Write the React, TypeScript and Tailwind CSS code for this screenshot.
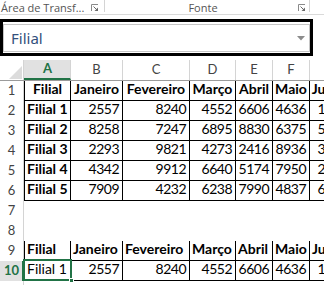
import type { ReactNode } from 'react'

// column widths incl. their right border line
const colW = ['w-[47px]', 'w-[52px]', 'w-[67px]', 'w-[46px]', 'w-[37px]', 'w-[37px]', 'w-[42px]']
const letters = ['A', 'B', 'C', 'D', 'E', 'F', 'G']
const headers = ['Filial', 'Janeiro', 'Fevereiro', 'Março', 'Abril', 'Maio', 'Junho']

const data: (string | number)[][] = [
  ['Filial 1', 2557, 8240, 4552, 6606, 4636, 1783],
  ['Filial 2', 8258, 7247, 6895, 8830, 6375, 5120],
  ['Filial 3', 2293, 9821, 4273, 2416, 8936, 3391],
  ['Filial 4', 4342, 9912, 6640, 5174, 7950, 2748],
  ['Filial 5', 7909, 4232, 6238, 7990, 4837, 6602],
]

function Launcher() {
  return (
    <svg width="8" height="8" viewBox="0 0 8 8" className="shrink-0">
      <path d="M0.5 7V0.5H7" fill="none" stroke="#8a8a8a" strokeWidth="1" />
      <path d="M2.5 2.5L6.5 6.5" stroke="#6a6a6a" strokeWidth="1" />
      <path d="M7 3.5V7H3.5Z" fill="#6a6a6a" />
    </svg>
  )
}

function Ribbon() {
  return (
    <div className="flex h-[15px] items-start border-b border-[#dadada] font-['Open_Sans',sans-serif] text-[11px] leading-[13px] text-[#555]">
      <div className="flex w-[104px] items-center justify-between pt-[1px] pr-[5px] pl-[1px]">
        <span className="whitespace-nowrap">Área de Transf...</span>
        <Launcher />
      </div>
      <div className="h-[12px] w-px bg-[#d4d4d4]" />
      <div className="flex w-[204px] items-center pt-[1px] pr-[3px]">
        <span className="flex-1 pl-[3px] text-center">Fonte</span>
        <Launcher />
      </div>
      <div className="h-[12px] w-px bg-[#d4d4d4]" />
    </div>
  )
}

function FormulaBox() {
  return (
    <div className="mt-[4px] mb-[4px] h-[37px] w-[313px] border-[3px] border-black pt-[2px] pb-[1px]">
      <div className="flex h-full items-center justify-between border border-[#c6c6c6] pr-[4px] pl-[7px]">
        <span className="font-['Noto_Sans',sans-serif] text-[15px] leading-none text-[#33507c]">Filial</span>
        <svg width="8" height="5" viewBox="0 0 8 5">
          <path d="M0 0H8L4 4.5Z" fill="#8c8c8c" />
        </svg>
      </div>
    </div>
  )
}

function RowHead({ n, active }: { n?: number; active?: boolean }) {
  return (
    <div
      className={
        active
          ? 'flex h-full w-[24px] shrink-0 items-center justify-center border-r-2 border-[#217346] bg-[#e1e1e1] pl-[1px] text-[13px] font-bold text-[#217346]'
          : 'flex h-full w-[24px] shrink-0 items-center justify-center border-r border-[#d4d4d4] bg-white text-[13px] text-[#444]'
      }
    >
      {n}
    </div>
  )
}

type CellProps = {
  i: number
  children?: ReactNode
  boxed?: boolean
  bold?: boolean
  align?: 'l' | 'c' | 'r'
  selected?: boolean
}

function Cell({ i, children, boxed, bold, align = 'l', selected }: CellProps) {
  const border = boxed
    ? i === 0
      ? 'border-l border-r border-black'
      : 'border-r border-black'
    : i === 0
      ? 'border-l border-r border-transparent'
      : 'border-r border-transparent'
  const justify =
    align === 'r' ? 'justify-end pr-[3px] tracking-[-0.5px]' : align === 'c' ? 'justify-center' : 'justify-start pl-[2px]'
  return (
    <div
      className={`relative flex h-full shrink-0 items-end overflow-visible whitespace-nowrap pb-[1px] ${colW[i]} ${border} ${justify} ${
        bold ? 'font-bold' : ''
      }`}
    >
      {children}
      {selected && (
        <div className="pointer-events-none absolute -top-[2px] -right-[2px] -bottom-[1px] -left-[2px] border-2 border-[#217346]">
          <div className="absolute -right-[4px] -bottom-[4px] h-[5px] w-[5px] border border-white bg-[#217346]" />
        </div>
      )}
    </div>
  )
}

function Row({
  n,
  bottom,
  children,
  active,
}: {
  n: number
  bottom?: boolean
  children?: ReactNode
  active?: boolean
}) {
  return (
    <div className="flex h-[20px]">
      <RowHead n={n} active={active} />
      <div className={`flex h-full ${bottom ? 'border-b border-black' : 'border-b border-transparent'}`}>{children}</div>
    </div>
  )
}

export default function App() {
  return (
    <div className="h-[285px] w-[324px] overflow-hidden bg-white font-['Lato',sans-serif] text-[14px] text-black">
      <Ribbon />
      <FormulaBox />

      {/* column headers */}
      <div className="flex h-[21px] border-b border-[#9b9b9b] text-[13px] text-[#444]">
        <div className="relative h-full w-[24px] shrink-0 border-r border-[#d4d4d4]">
          <svg className="absolute right-[1px] bottom-[1px]" width="13" height="13" viewBox="0 0 13 13">
            <path d="M13 0V13H0Z" fill="#dcdcdc" />
          </svg>
        </div>
        {letters.map((l, i) => (
          <div
            key={l}
            className={
              i === 0
                ? `flex h-full shrink-0 items-center justify-center ${colW[i]} -mb-px border-r border-b-2 border-r-[#d4d4d4] border-b-[#217346] bg-[#e1e1e1] pl-px font-bold text-[#217346]`
                : `flex h-full shrink-0 items-center justify-center ${colW[i]} border-r border-[#d4d4d4]`
            }
          >
            {l}
          </div>
        ))}
      </div>

      {/* table 1 */}
      <Row n={1} bottom>
        {headers.map((h, i) => (
          <Cell key={h} i={i} boxed bold align="c">
            {h}
          </Cell>
        ))}
      </Row>
      {data.map((r, ri) => (
        <Row key={ri} n={ri + 2} bottom>
          {r.map((v, i) => (
            <Cell key={i} i={i} boxed bold={i === 0} align={i === 0 ? 'l' : 'r'}>
              {v}
            </Cell>
          ))}
        </Row>
      ))}
      <Row n={7}>
        {colW.map((_, i) => (
          <Cell key={i} i={i} />
        ))}
      </Row>
      <Row n={8}>
        {colW.map((_, i) => (
          <Cell key={i} i={i} />
        ))}
      </Row>

      {/* table 2 */}
      <Row n={9} bottom>
        {headers.map((h, i) => (
          <Cell key={h} i={i} boxed bold>
            {h}
          </Cell>
        ))}
      </Row>
      <Row n={10} bottom active>
        {data[0].map((v, i) => (
          <Cell key={i} i={i} boxed align={i === 0 ? 'l' : 'r'} selected={i === 0}>
            {v}
          </Cell>
        ))}
      </Row>
      <Row n={11}>
        {colW.map((_, i) => (
          <Cell key={i} i={i} />
        ))}
      </Row>
    </div>
  )
}
